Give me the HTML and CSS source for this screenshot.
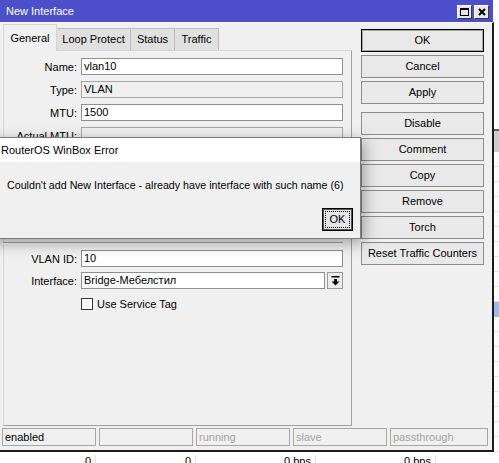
FILE: index.html
```html
<!DOCTYPE html>
<html>
<head>
<meta charset="utf-8">
<title>New Interface</title>
<link rel="stylesheet" href="styles.css">
</head>
<body>
<div class="desk">
  <div class="back">
    <div class="bk-top"></div>
    <div class="bk-head"></div>
    <div class="bk-rows r1"></div>
    <div class="bk-sel"></div>
    <div class="bk-rows r2"></div>
    <div class="bk-last">
      <span class="cell w1">0</span><span class="cell w2">0</span><span class="cell w3">0 bps</span><span class="cell w4">0 bps</span>
    </div>
  </div>

  <div class="win">
    <div class="titlebar">
      <span class="title">New Interface</span>
      <div class="tb-btns">
        <span class="tbb"><svg width="9" height="8" viewBox="0 0 9 8"><rect x="0.5" y="0.5" width="8" height="7" fill="none" stroke="#000"/><rect x="0" y="0" width="9" height="2" fill="#000"/></svg></span>
        <span class="tbb"><svg width="8" height="8" viewBox="0 0 8 8"><path d="M1 1 L7 7 M7 1 L1 7" stroke="#000" stroke-width="1.9" fill="none"/></svg></span>
      </div>
    </div>
    <div class="winbody">
      <div class="main">
        <div class="left">
          <div class="tabs">
            <span class="tab active t1">General</span>
            <span class="tab t2">Loop Protect</span>
            <span class="tab t3">Status</span>
            <span class="tab t4">Traffic</span>
          </div>
          <div class="panel">
            <div class="row"><span class="lbl">Name:</span><span class="fld">vlan10</span></div>
            <div class="row"><span class="lbl">Type:</span><span class="fld dis">VLAN</span></div>
            <div class="row"><span class="lbl">MTU:</span><span class="fld">1500</span></div>
            <div class="row"><span class="lbl">Actual MTU:</span><span class="fld dis"></span></div>
            <div class="row"><span class="lbl"></span><span class="fld dis"></span></div>
            <div class="row"><span class="lbl"></span><span class="fld dis"></span></div>
            <div class="row"><span class="lbl"></span><span class="fld"></span></div>
            <div class="row"><span class="lbl"></span><span class="fld"></span></div>
            <div class="sep"></div>
            <div class="row"><span class="lbl">VLAN ID:</span><span class="fld">10</span></div>
            <div class="row"><span class="lbl">Interface:</span><span class="fld short">Bridge-Мебелстил</span><span class="ddbtn"><svg width="9" height="10" viewBox="0 0 9 10"><rect x="0.5" y="0" width="8" height="1.5" fill="#000"/><rect x="3" y="3" width="3" height="3" fill="#000"/><polygon points="0.5,5.5 8.5,5.5 4.5,9.5" fill="#000"/></svg></span></div>
            <div class="row chkrow"><span class="chk"></span><span>Use Service Tag</span></div>
          </div>
        </div>
        <div class="btns">
          <span class="btn def">OK</span>
          <span class="btn">Cancel</span>
          <span class="btn">Apply</span>
          <span class="btn gap">Disable</span>
          <span class="btn">Comment</span>
          <span class="btn">Copy</span>
          <span class="btn">Remove</span>
          <span class="btn">Torch</span>
          <span class="btn">Reset Traffic Counters</span>
        </div>
      </div>
      <div class="status">
        <span class="sc on">enabled</span>
        <span class="sc"></span>
        <span class="sc">running</span>
        <span class="sc">slave</span>
        <span class="sc last">passthrough</span>
      </div>
    </div>
  </div>

  <div class="dlg">
    <div class="dlg-title">RouterOS WinBox Error</div>
    <div class="dlg-body">
      <div class="msg">Couldn't add New Interface - already have interface with such name (6)</div>
      <div class="dlg-actions"><span class="okbtn">OK</span></div>
    </div>
  </div>
</div>
</body>
</html>
```

FILE: styles.css
```css
* { box-sizing: border-box; }
html, body { margin: 0; padding: 0; }
body {
  width: 499px;
  height: 463px;
  overflow: hidden;
  font-family: "Liberation Sans", Arial, sans-serif;
  font-size: 11px;
  color: #000;
  background: #fff;
}
.desk { position: relative; width: 499px; height: 463px; overflow: hidden; }

/* background window */
.back { display: flex; flex-direction: column; width: 499px; height: 463px; background: #fff; }
.bk-top { height: 129px; flex: none; }
.bk-head { height: 23px; flex: none; border-top: 2px solid #5e5e5e; background: #cdcdcd; }
.bk-rows { flex: none; background: repeating-linear-gradient(to bottom, transparent 0, transparent 14px, #e4e4e4 14px, #e4e4e4 15px); }
.r1 { height: 150px; }
.bk-sel { height: 15px; flex: none; background: #9dbbe6; }
.r2 { height: 135px; }
.bk-last { display: flex; padding-top: 3px; line-height: 13px; flex: none; }
.cell { flex: none; text-align: right; padding-right: 4px; border-right: 1px solid #e4e4e4; height: 20px; }
.w1 { width: 96px; }
.w2 { width: 100px; }
.w3 { width: 120px; }
.w4 { width: 120px; }

/* main window */
.win {
  position: absolute;
  left: 0;
  top: 0;
  width: 494px;
  height: 452px;
  display: flex;
  flex-direction: column;
}
.titlebar {
  height: 22px;
  flex: none;
  width: 493px;
  background: #4c4fc9;
  display: flex;
  justify-content: space-between;
  align-items: flex-start;
  padding: 0 4px 0 6px;
}
.title { color: #fff; line-height: 22px; font-size: 11px; }
.tb-btns { display: flex; gap: 2px; margin-top: 5px; }
.tbb {
  width: 15px;
  height: 14px;
  background: #e6e6e6;
  border: 1px solid;
  border-color: #fff #3a3a3a #3a3a3a #fff;
  display: flex;
  align-items: center;
  justify-content: center;
}
.winbody {
  flex: 1;
  display: flex;
  flex-direction: column;
  background: #f0f0f0;
  border-top: 1px solid #fff;
  border-right: 2px solid #1c1c1c;
  border-bottom: 2px solid #1c1c1c;
}
.main { flex: 1; display: flex; min-height: 0; }
.left { width: 352px; flex: none; padding-left: 3px; display: flex; flex-direction: column; }

.tabs { height: 27px; flex: none; display: flex; align-items: flex-end; }
.tab {
  flex: none;
  height: 22px;
  line-height: 21px;
  text-align: center;
  background: #e0e0e0;
  border: 1px solid #bcbcbc;
  border-bottom: none;
}
.tab.active {
  position: relative;
  z-index: 1;
  height: 27px;
  line-height: 26px;
  margin-bottom: -1px;
  background: #f0f0f0;
  border-color: #d6d6d6;
}
.t1 { width: 54px; }
.t2 { width: 75px; margin-left: -1px; }
.t3 { width: 45px; margin-left: -1px; }
.t4 { width: 45px; margin-left: -1px; }

.panel {
  flex: 1;
  border: 1px solid;
  border-color: #d6d6d6 #a0a0a0 #a0a0a0 #d6d6d6;
  padding-top: 7px;
}
.row { display: flex; align-items: center; height: 17px; margin-bottom: 6px; }
.lbl { width: 73px; margin-right: 4px; text-align: right; white-space: nowrap; }
.fld {
  width: 262px;
  height: 17px;
  border: 1px solid #8f8f8f;
  background: #fff;
  padding-left: 2px;
  line-height: 15px;
  white-space: nowrap;
}
.fld.dis { background: #f0f0f0; border-color: #a6a6a6; }
.fld.short { width: 244px; margin-right: 2px; }
.ddbtn {
  width: 16px;
  height: 17px;
  border: 1px solid #9a9a9a;
  background: #ececec;
  display: flex;
  align-items: center;
  justify-content: center;
}
.sep {
  height: 2px;
  margin: 1px 8px 6px -1px;
  border-top: 1px solid #a0a0a0;
  border-bottom: 1px solid #fff;
}
.row + .sep + .row { margin-bottom: 5px; }
.chkrow { padding-left: 77px; margin-top: 1px; }
.chk { width: 12px; height: 12px; border: 1px solid #3a3a3a; background: #fff; margin-right: 4px; }

.btns {
  width: 123px;
  flex: none;
  margin-left: 9px;
  padding-top: 6px;
  display: flex;
  flex-direction: column;
  gap: 3px;
}
.btn {
  height: 23px;
  border: 1px solid #8c8c8c;
  background: #e9e9e9;
  text-align: center;
  line-height: 21px;
  white-space: nowrap;
}
.btn.def { border-color: #000; box-shadow: inset 0 0 0 1px #a8a8a8; }
.btn.gap { margin-top: 5px; }

.status { display: flex; gap: 3px; padding-left: 2px; margin: 2px 0 4px; flex: none; }
.sc {
  width: 94px;
  height: 18px;
  border: 1px solid #a6a6a6;
  padding-left: 2px;
  line-height: 16px;
  color: #a3a3a3;
}
.sc.on { color: #000; }
.sc.last { width: 98px; }

/* error dialog */
.dlg {
  position: absolute;
  left: -20px;
  top: 137px;
  width: 381px;
  height: 102px;
  border: 1px solid #7b7b7b;
  background: #f0f0f0;
  box-shadow: 3px 4px 14px rgba(0, 0, 0, 0.35);
  display: flex;
  flex-direction: column;
  z-index: 5;
}
.dlg-title { height: 24px; flex: none; background: #fff; padding-left: 20px; line-height: 24px; font-size: 11px; }
.dlg-body { flex: 1; padding: 16px 0 0 26px; display: flex; flex-direction: column; }
.msg { line-height: 14px; white-space: nowrap; font-size: 10.7px; }
.dlg-actions { display: flex; justify-content: flex-end; padding-right: 7px; margin-top: 16px; }
.okbtn {
  width: 31px;
  height: 23px;
  border: 1px solid #000;
  box-shadow: inset 0 0 0 1px #555;
  background: #e5e5e5;
  text-align: center;
  line-height: 21px;
  outline: 1px dotted #000;
  outline-offset: -4px;
}
```
